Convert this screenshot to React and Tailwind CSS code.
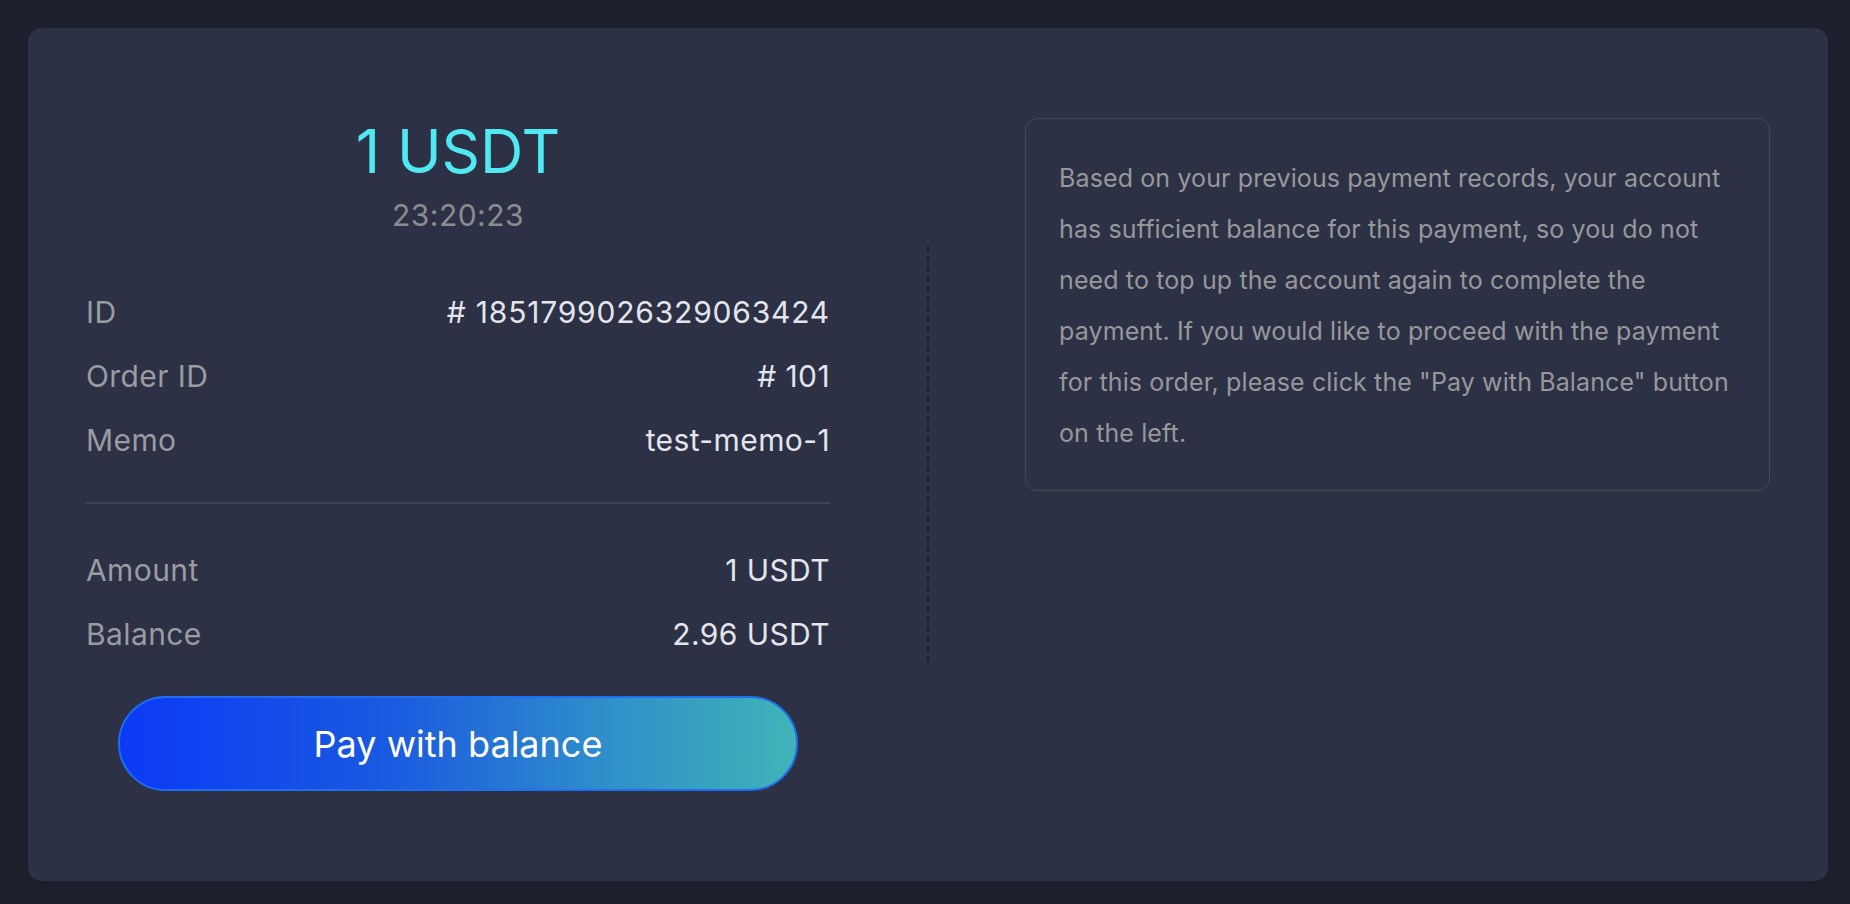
export default function App() {
  const rows1 = [
    ["ID", "# 1851799026329063424", "tracking-[0.8px]"],
    ["Order ID", "# 101", ""],
    ["Memo", "test-memo-1", ""],
  ];
  const rows2 = [
    ["Amount", "1 USDT", ""],
    ["Balance", "2.96 USDT", ""],
  ];
  const Row = ({ k, v, t }) => (
    <div className="flex h-[64px] items-center justify-between text-[30px] tracking-[0.4px]">
      <span className="text-[#9b9ba1]">{k}</span>
      <span className={"text-[#e4e5ec] " + t}>{v}</span>
    </div>
  );
  return (
    <div className="min-h-[904px] w-[1850px] bg-[#1b202c] pl-[28px] pt-[28px] font-[Inter,sans-serif]">
      <div className="flex h-[853px] w-[1800px] rounded-[14px] bg-[#2c3145] px-[58px]">
        <div className="flex w-[744px] flex-col pt-[93px]">
          <div className="text-center text-[60px] leading-none text-[#50e9f1]">1 USDT</div>
          <div className="mt-[19px] text-center text-[30px] leading-none tracking-[0.5px] text-[#8c8c8f]">23:20:23</div>
          <div className="mt-[50px]">
            {rows1.map(([k, v, t]) => (
              <Row key={k} k={k} v={v} t={t} />
            ))}
          </div>
          <div className="mt-[30px] h-[2px] bg-[#3d4255]" />
          <div className="mt-[34px]">
            {rows2.map(([k, v, t]) => (
              <Row key={k} k={k} v={v} t={t} />
            ))}
          </div>
          <div className="mt-[30px] flex justify-center">
            <button className="flex h-[95px] w-[680px] items-center justify-center rounded-full border-2 border-[#1f6ef2] bg-[linear-gradient(90deg,#0b3af6_0%,#1a5ae0_40%,#2e8ccb_70%,#40b4b8_100%)] text-[36px] text-white">
              Pay with balance
            </button>
          </div>
        </div>
        <div className="ml-[97px] mt-[218px] h-[418px] w-[2px] bg-[repeating-linear-gradient(180deg,#1b2030_0px,#1b2030_6px,transparent_6px,transparent_10px)]" />
        <div className="ml-[96px] mt-[90px] w-[745px] self-start">
          <div className="rounded-[12px] border border-[#46494f] px-[33px] pb-[31px] pt-[34px] text-[25px] leading-[51px] tracking-[0.12px] text-[#98989b]">
            Based on your previous payment records, your account has sufficient balance for this payment, so you do not need to top up the account again to complete the payment. If you would like to proceed with the payment for this order, please click the "Pay with Balance" button on the left.
          </div>
        </div>
      </div>
    </div>
  );
}
